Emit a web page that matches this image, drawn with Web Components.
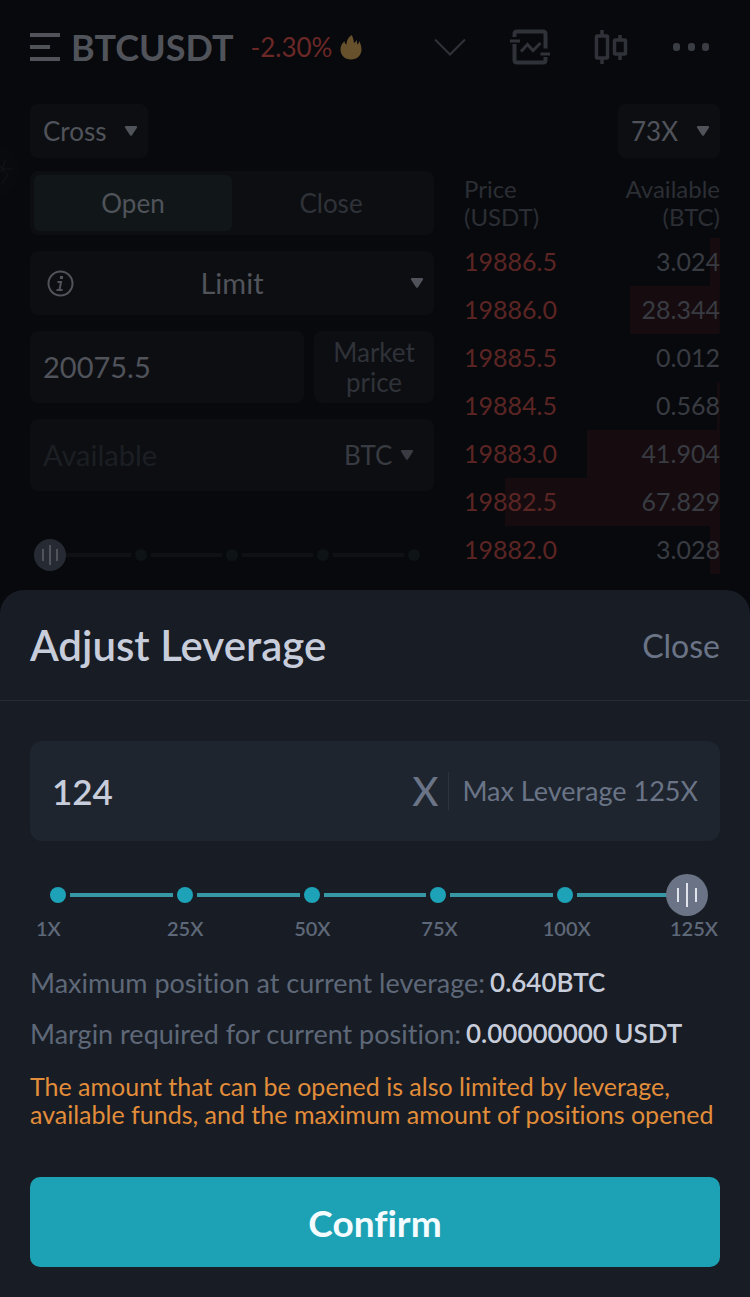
<!DOCTYPE html>
<html lang="en">
<head>
<meta charset="UTF-8">
<meta name="viewport" content="width=device-width, initial-scale=1">
<title>BTCUSDT</title>
<style>
    body {
        margin: 0;
        background-color: #08090d;
        font-family: Lato, Roboto, sans-serif;
        font-variant-ligatures: none;
    }
</style>
</head>
<body>
<trade-app>
    <trade-header slot="header" pair="BTCUSDT" change="-2.30%"></trade-header>
    <order-form slot="form"></order-form>
    <order-book slot="book"></order-book>
    <leverage-sheet slot="sheet" heading="Adjust Leverage" value="124" max="125">
        <info-line label="Maximum position at current leverage:">0.640BTC</info-line>
        <info-line label="Margin required for current position:">0.00000000 USDT</info-line>
        <p slot="warning">The amount that can be opened is also limited by leverage, available funds, and the maximum amount of positions opened</p>
    </leverage-sheet>
</trade-app>

<script>
/**
 * 所有组件的基类，负责挂载 shadow root
 */
class BaseElement extends HTMLElement {
    constructor() {
        super();
        this.attachShadow({ mode: 'open' });
    }

    render(html) {
        const template = document.createElement('template');
        template.innerHTML = `
        <style>
            * {
                box-sizing: border-box;
            }
            button, input, select {
                margin: 0;
                padding: 0;
                border: 0;
                outline: none;
                background: none;
                font: inherit;
                color: inherit;
                appearance: none;
            }
            button, select {
                cursor: pointer;
            }
            svg {
                display: block;
                fill: none;
            }
        </style>
        ${html}
        `;
        this.shadowRoot.replaceChildren(template.content.cloneNode(true));
    }
}

/**
 * 下拉选择
 */
class DropDown extends BaseElement {
    connectedCallback() {
        const options = this.getAttribute('options').split(',');
        this.render(`
        <style>
            :host {
                display: grid;
                align-items: center;
                border-radius: 8px;
                background-color: #0d0e12;
                color: #50535a;
                font-size: 26px;
                line-height: 30px;
            }
            select, svg {
                grid-area: 1 / 1;
            }
            select {
                width: 100%;
                height: 100%;
                padding: var(--select-padding, 0 41px 0 13px);
                text-align-last: var(--select-align, left);
            }
            svg {
                justify-self: end;
                margin-right: var(--caret-gap, 10px);
                pointer-events: none;
            }
        </style>
        <select aria-label="${this.getAttribute('label')}">
            ${options.map((item) => `<option>${item}</option>`).join('')}
        </select>
        <svg width="14" height="12" viewBox="0 0 14 12"><path d="M2 1h10c1 0 1.500 1 .9 1.800L8 10.300c-.5.700-1.500.700-2 0L1.100 2.800C.5 2 1 1 2 1z" fill="currentColor"/></svg>
        `);
    }
}

/**
 * 带刻度的滑块
 */
class StepSlider extends BaseElement {
    connectedCallback() {
        const steps = Number(this.getAttribute('steps'));
        let track = '<i class="dot"></i>';
        for (let i = 1; i < steps; i++) {
            track += '<i class="line"></i><i class="dot"></i>';
        }
        this.render(`
        <style>
            :host {
                --knob: 42px;
                --dot: 16px;
                --dot-color: #1da2b7;
                --line-color: #3797a5;
                --knob-color: #6a7486;
                --bar-color: #dfe3ec;
                --bar: 24px;
                --bar-side: 14px;
                display: grid;
                align-items: center;
            }
            .track, input {
                grid-area: 1 / 1;
            }
            .track {
                display: flex;
                align-items: center;
                gap: 4px;
                padding: 0 calc((var(--knob) - var(--dot)) / 2);
            }
            .dot {
                width: var(--dot);
                height: var(--dot);
                border-radius: 50%;
                background-color: var(--dot-color);
            }
            .line {
                flex: 1;
                height: 4px;
                background-color: var(--line-color);
            }
            input {
                width: 100%;
                height: var(--knob);
            }
            input::-webkit-slider-thumb {
                appearance: none;
                width: var(--knob);
                height: var(--knob);
                border-radius: 50%;
                background:
                    linear-gradient(var(--bar-color), var(--bar-color)) center / 2px var(--bar) no-repeat,
                    linear-gradient(var(--bar-color), var(--bar-color)) 28% center / 2px var(--bar-side) no-repeat,
                    linear-gradient(var(--bar-color), var(--bar-color)) 72% center / 2px var(--bar-side) no-repeat,
                    var(--knob-color);
            }
        </style>
        <div class="track">${track}</div>
        <input type="range" aria-label="${this.getAttribute('label')}" min="${this.getAttribute('min')}" max="${this.getAttribute('max')}" value="${this.getAttribute('value')}">
        `);
        this.shadowRoot.querySelector('input').addEventListener('input', (e) => {
            this.dispatchEvent(new CustomEvent('change', { detail: e.target.value }));
        });
    }

    set value(val) {
        this.shadowRoot.querySelector('input').value = val;
    }
}

/**
 * 顶部栏：交易对、涨跌幅和工具按钮
 */
class TradeHeader extends BaseElement {
    connectedCallback() {
        this.render(`
        <style>
            :host {
                display: flex;
                align-items: center;
                height: 94px;
                color: #50535a;
            }
            h1 {
                margin: 0 17px 0 10px;
                font-size: 36px;
                font-weight: 700;
                line-height: 44px;
            }
            .change {
                margin-right: 8px;
                color: #6b2826;
                font-size: 26px;
            }
            .tools {
                display: flex;
                align-items: center;
                gap: 44px;
                margin: 0 10px 0 auto;
                color: #2f3238;
            }
        </style>
        <button aria-label="Menu">
            <svg width="31" height="28" viewBox="0 0 31 28" stroke="currentColor" stroke-width="4"><path d="M0 2h30M0 14h20M0 26h30"/></svg>
        </button>
        <h1>${this.getAttribute('pair')}</h1>
        <span class="change">${this.getAttribute('change')}</span>
        <svg width="22" height="25" viewBox="0 0 22 25"><path d="M11.500 0c-4 3-5 6.500-5 9.500C5.200 9 4.600 7.500 4.500 6 1.500 9 .5 11.500.5 14.500.5 20.500 5 24.500 11 24.500s10.500-4 10.500-10c0-3-1-5.500-2-8.500-.6 1.800-1.200 3-2.300 3.500.2-1.500-.2-3-.7-4.500-.7 1.500-1.500 2.500-2.500 3C13.500 4.500 13 2 11.500 0z" fill="#66512c"/></svg>
        <div class="tools">
            <button aria-label="More pairs">
                <svg width="32" height="18" viewBox="0 0 32 18" stroke="currentColor" stroke-width="2"><path d="M1 1.500l15 15 15-15"/></svg>
            </button>
            <button aria-label="Trade panel">
                <svg width="40" height="36" viewBox="0 0 40 36" stroke="currentColor" stroke-width="4">
                    <path d="M4.500 8V5c0-1.500 1-2.500 2.500-2.500h26c1.500 0 2.500 1 2.500 2.500v14.500M35.500 28v3c0 1.500-1 2.500-2.500 2.500H7c-1.500 0-2.500-1-2.500-2.500V15"/>
                    <path d="M0 12h10M30.500 25H40" stroke-width="3"/>
                    <path d="M11 22.500l6.500-7 5.500 6 7.500-7.500" stroke-width="3"/>
                </svg>
            </button>
            <button aria-label="Chart">
                <svg width="34" height="36" viewBox="0 0 34 36" stroke="currentColor" stroke-width="3.500">
                    <rect x="2.500" y="7" width="11" height="22" rx="1"/>
                    <rect x="20.500" y="11" width="11" height="14" rx="1"/>
                    <path d="M8 1v5M8 30v5M26 6v4M26 26v5"/>
                </svg>
            </button>
            <button aria-label="More">
                <svg width="38" height="8" viewBox="0 0 38 8"><g fill="#3a3d43"><rect x="1" width="7" height="8" rx="3"/><rect x="16" width="7" height="8" rx="3"/><rect x="30" width="7" height="8" rx="3"/></g></svg>
            </button>
        </div>
        `);
    }
}

/**
 * 下单表单
 */
class OrderForm extends BaseElement {
    connectedCallback() {
        this.render(`
        <style>
            :host {
                display: flex;
                flex-direction: column;
                gap: 16px;
                color: #50535a;
                font-size: 26px;
                line-height: 30px;
            }
            .tabs, .limit, .field {
                border-radius: 8px;
                background-color: #0d0e12;
            }
            .tabs {
                display: grid;
                grid-template-columns: 1fr 1fr;
                height: 64px;
                padding: 4px;
            }
            .tabs button {
                border-radius: 6px;
                color: #2f3238;
            }
            .tabs .active {
                background-color: #111719;
                color: #50535a;
            }
            .limit {
                display: grid;
                align-items: center;
                height: 64px;
            }
            .limit > * {
                grid-area: 1 / 1;
            }
            .limit drop-down {
                --select-align: center;
                --select-padding: 0;
                height: 100%;
                background: none;
                font-size: 29px;
            }
            .limit button {
                z-index: 1;
                justify-self: start;
                margin-left: 17px;
            }
            .row {
                display: grid;
                grid-template-columns: minmax(0, 1fr) 120px;
                gap: 10px;
            }
            .field {
                display: flex;
                height: 72px;
                padding-left: 13px;
            }
            .field input {
                flex: 1;
                min-width: 0;
                font-size: 29px;
            }
            .field input::placeholder {
                color: #1b1f23;
            }
            .field drop-down {
                --caret-gap: 20px;
                background: none;
                color: #383b41;
            }
            .market {
                padding: 0 16px;
                border-radius: 8px;
                background-color: #0d0e12;
                color: #2f3238;
            }
            step-slider {
                --knob: 32px;
                --dot: 12px;
                --dot-color: #0e1316;
                --line-color: #0f1114;
                --knob-color: #262a33;
                --bar-color: #51535a;
                --bar: 20px;
                --bar-side: 12px;
                margin: 32px 4px 0;
            }
        </style>
        <div class="tabs">
            <button class="active">Open</button>
            <button>Close</button>
        </div>
        <div class="limit">
            <drop-down label="Order type" options="Limit,Market"></drop-down>
            <button aria-label="Order type help">
                <svg width="27" height="27" viewBox="0 0 27 27" stroke="currentColor" stroke-width="2">
                    <circle cx="13.500" cy="13.500" r="12"/>
                    <path d="M14.500 6v3" stroke-width="3"/>
                    <path d="M10.500 12h3.500l-1.500 8M9.500 20h6"/>
                </svg>
            </button>
        </div>
        <div class="row">
            <div class="field"><input type="text" aria-label="Price" value="20075.5"></div>
            <button class="market">Market price</button>
        </div>
        <div class="field">
            <input type="text" aria-label="Amount" placeholder="Available">
            <drop-down label="Unit" options="BTC"></drop-down>
        </div>
        <step-slider label="Amount percent" steps="5" min="0" max="100" value="0"></step-slider>
        `);
        this.shadowRoot.querySelectorAll('.tabs button').forEach((tab, index, tabs) => {
            tab.addEventListener('click', () => {
                tabs.forEach((item) => item.classList.toggle('active', item === tab));
            });
        });
    }
}

/**
 * 卖盘深度列表，depth 为背景条占行宽的百分比
 */
class OrderBook extends BaseElement {
    connectedCallback() {
        const rows = [
            { price: '19886.5', amount: '3.024', depth: 4 },
            { price: '19886.0', amount: '28.344', depth: 35 },
            { price: '19885.5', amount: '0.012', depth: 0 },
            { price: '19884.5', amount: '0.568', depth: 1 },
            { price: '19883.0', amount: '41.904', depth: 52 },
            { price: '19882.5', amount: '67.829', depth: 84 },
            { price: '19882.0', amount: '3.028', depth: 4 }
        ];
        this.render(`
        <style>
            :host {
                display: block;
                padding-top: 4px;
                color: #383b41;
                font-size: 25px;
            }
            table {
                width: 100%;
                border-collapse: collapse;
            }
            th, td {
                padding: 0;
                text-align: left;
            }
            th {
                padding-bottom: 7px;
                color: #2b2e34;
                font-size: 24px;
                font-weight: 400;
                line-height: 28px;
            }
            td {
                height: 48px;
                padding-bottom: 2px;
                line-height: 30px;
            }
            th:last-child, td:last-child {
                text-align: right;
            }
            tbody tr {
                background: linear-gradient(#160c10, #160c10) right / var(--depth) 100% no-repeat;
            }
            .price {
                color: #5c2523;
            }
        </style>
        <table>
            <thead>
                <tr><th>Price<br>(USDT)</th><th>Available<br>(BTC)</th></tr>
            </thead>
            <tbody>
                ${rows.map((row) => `
                <tr style="--depth: ${row.depth}%">
                    <td class="price">${row.price}</td>
                    <td>${row.amount}</td>
                </tr>`).join('')}
            </tbody>
        </table>
        `);
    }
}

/**
 * 一行说明文字，slot 为数值
 */
class InfoLine extends BaseElement {
    connectedCallback() {
        this.render(`
        <style>
            :host {
                display: flex;
                align-items: center;
                gap: 5px;
                color: #5e6878;
                font-size: 27px;
                line-height: 51px;
            }
            b {
                color: #c8cddb;
                font-size: 26px;
                font-weight: 600;
            }
        </style>
        <span>${this.getAttribute('label')}</span>
        <b><slot></slot></b>
        `);
    }
}

/**
 * 底部弹层：调整杠杆
 */
class LeverageSheet extends BaseElement {
    connectedCallback() {
        const value = this.getAttribute('value');
        const max = this.getAttribute('max');
        this.render(`
        <style>
            :host {
                display: block;
                border-radius: 24px 24px 0 0;
                background-color: #181c24;
                color: #c8cddb;
            }
            header {
                display: flex;
                align-items: center;
                justify-content: space-between;
                height: 111px;
                padding: 0 30px;
                border-bottom: 1px solid #262c36;
            }
            h2 {
                margin: 0;
                font-size: 42px;
                font-weight: 600;
            }
            header button {
                color: #6a7486;
                font-size: 32px;
            }
            .body {
                padding: 40px 30px 30px;
            }
            .field {
                display: flex;
                align-items: center;
                height: 100px;
                padding: 0 22px;
                border-radius: 12px;
                background-color: #1e252f;
                color: #6a7486;
            }
            .field input {
                flex: 1;
                min-width: 0;
                color: #c8cddb;
                font-size: 35px;
                font-weight: 600;
            }
            .unit {
                margin-right: 10px;
                font-size: 40px;
                font-weight: 500;
            }
            .max {
                padding-left: 13px;
                border-left: 1px solid #2b333e;
                font-size: 27px;
                line-height: 38px;
            }
            step-slider {
                margin: 33px 7px 0;
            }
            .labels {
                display: flex;
                justify-content: space-between;
                padding: 0 4px 0 6px;
                color: #5e6878;
                font-size: 20px;
                font-weight: 600;
                line-height: 24px;
            }
            .labels span {
                display: flex;
                justify-content: center;
                width: 44px;
            }
            .labels span:first-child {
                justify-content: flex-start;
            }
            .info {
                margin-top: 17px;
            }
            ::slotted(p) {
                margin: 13px 0 0;
                color: #e28d3a;
                font-size: 25px;
                line-height: 28px;
            }
            .confirm {
                display: block;
                width: 100%;
                height: 90px;
                margin-top: 49px;
                border-radius: 10px;
                background-color: #1da2b5;
                color: #f4fcff;
                font-size: 37px;
                font-weight: 700;
            }
        </style>
        <header>
            <h2>${this.getAttribute('heading')}</h2>
            <button>Close</button>
        </header>
        <div class="body">
            <div class="field">
                <input type="text" inputmode="numeric" aria-label="Leverage" value="${value}">
                <span class="unit">X</span>
                <span class="max">Max Leverage ${max}X</span>
            </div>
            <step-slider label="Leverage" steps="6" min="1" max="${max}" value="${value}"></step-slider>
            <div class="labels">
                ${[1, 25, 50, 75, 100, 125].map((item) => `<span>${item}X</span>`).join('')}
            </div>
            <div class="info"><slot></slot></div>
            <slot name="warning"></slot>
            <button class="confirm">Confirm</button>
        </div>
        `);
        this.bindEvents();
    }

    /**
     * 输入框与滑块联动
     */
    bindEvents() {
        const input = this.shadowRoot.querySelector('input');
        const slider = this.shadowRoot.querySelector('step-slider');
        slider.addEventListener('change', (e) => {
            input.value = e.detail;
        });
        input.addEventListener('input', () => {
            slider.value = input.value;
        });
    }
}

/**
 * 页面容器
 */
class TradeApp extends BaseElement {
    connectedCallback() {
        this.render(`
        <style>
            :host {
                position: relative;
                display: flex;
                flex-direction: column;
                min-height: 100vh;
                overflow: hidden;
            }
            .trade {
                padding: 0 30px;
            }
            .modes {
                display: flex;
                justify-content: space-between;
                margin: 10px 0 13px;
            }
            .modes drop-down {
                height: 54px;
            }
            .columns {
                display: grid;
                grid-template-columns: minmax(0, 404fr) minmax(0, 256fr);
                gap: 30px;
                padding-bottom: 16px;
            }
            /* 贴边的悬浮按钮，只露出右半边 */
            .float {
                position: absolute;
                top: 142px;
                left: -36px;
                width: 56px;
                height: 56px;
                border-radius: 50%;
                background-color: #090a0e;
            }
            slot[name="sheet"]::slotted(*) {
                flex: 1;
            }
        </style>
        <button class="float" aria-label="Shortcuts">
            <svg width="56" height="56" viewBox="0 0 56 56" stroke="#131619"><path d="M32 18l6 9h10M42 17l-4 10 6 6-6 8M32 33l8-6"/></svg>
        </button>
        <div class="trade">
            <slot name="header"></slot>
            <div class="modes">
                <drop-down label="Margin mode" options="Cross"></drop-down>
                <drop-down label="Leverage" options="73X"></drop-down>
            </div>
            <div class="columns">
                <slot name="form"></slot>
                <slot name="book"></slot>
            </div>
        </div>
        <slot name="sheet"></slot>
        `);
    }
}

customElements.define('drop-down', DropDown);
customElements.define('step-slider', StepSlider);
customElements.define('trade-header', TradeHeader);
customElements.define('order-form', OrderForm);
customElements.define('order-book', OrderBook);
customElements.define('info-line', InfoLine);
customElements.define('leverage-sheet', LeverageSheet);
customElements.define('trade-app', TradeApp);
</script>
</body>
</html>
